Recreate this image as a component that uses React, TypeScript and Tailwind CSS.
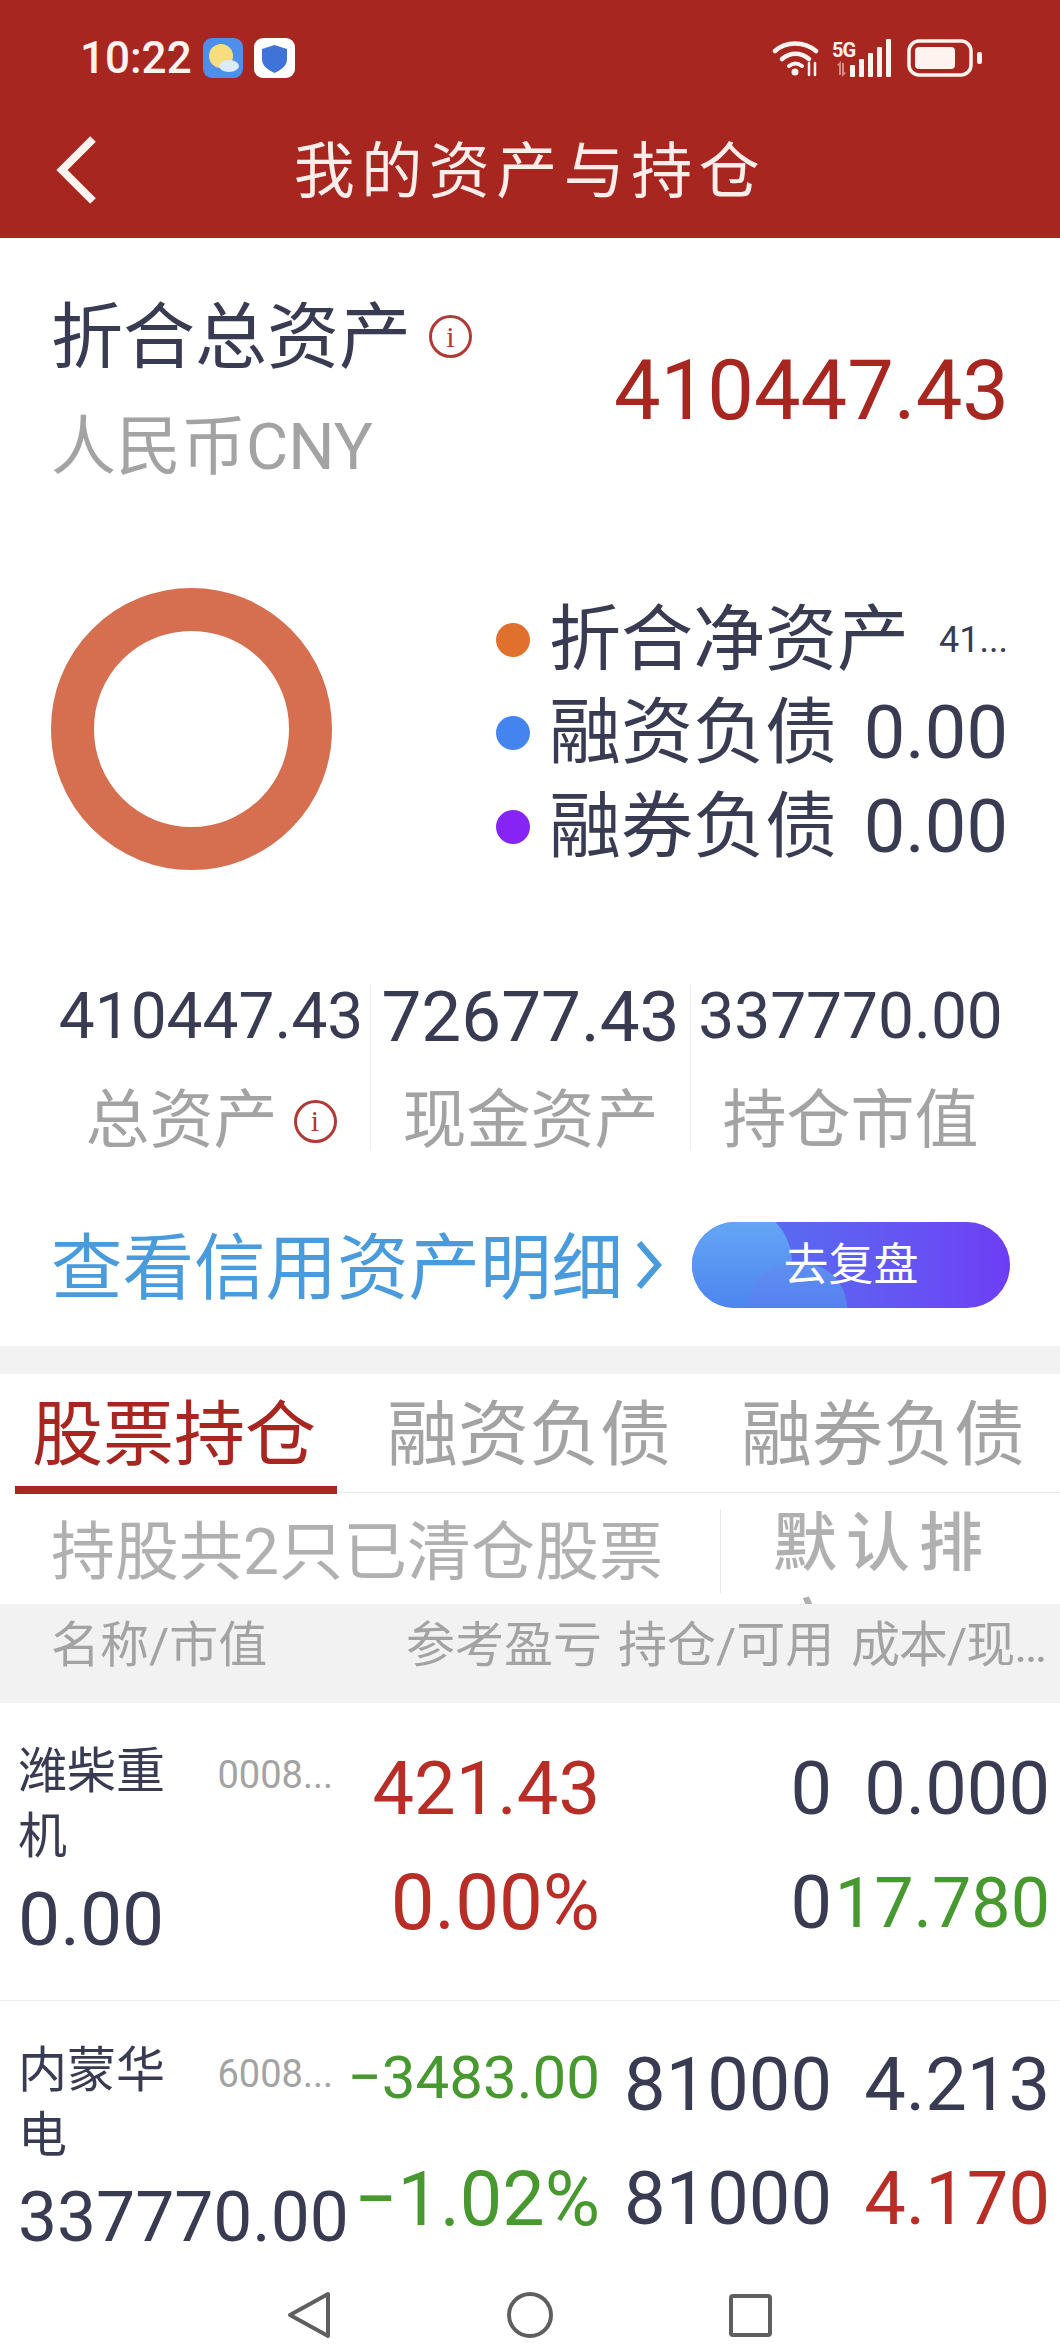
const holdings = [
  {
    name: "潍柴重机", code: "0008...", value: "0.00", valueSize: "text-[75px]",
    pnl: "421.43", pnlPct: "0.00%", pnlColor: "text-[#B92D27]", pnlLine: "text-[74px] leading-[100px]", pctSize: "text-[78px]", nameTop: "",
    hold: "0", avail: "0", cost: "0.000", costColor: "text-[#383B52]", price: "17.780", priceColor: "text-[#46982F]", priceSize: "text-[70px]",
  },
  {
    name: "内蒙华电", code: "6008...", value: "337770.00", valueSize: "text-[69.5px]",
    pnl: "−3483.00", pnlPct: "−1.02%", pnlColor: "text-[#46982F]", pnlLine: "text-[60px] leading-[86px]", pctSize: "text-[75.5px]", nameTop: "mt-[3px]",
    hold: "81000", avail: "81000", cost: "4.213", costColor: "text-[#383B52]", price: "4.170", priceColor: "text-[#B92D27]", priceSize: "text-[74px]",
  },
];

function InfoIcon({ className }: { className: string }) {
  return (
    <span className={`flex items-center justify-center rounded-full border-[3px] border-[#B03A34] font-['Liberation_Serif',serif] text-[#B03A34] ${className}`}>i</span>
  );
}

function StatusBar() {
  return (
    <div className="flex h-[100px] items-center pl-[80px] pr-[77px] pt-[15px]">
      <span className="w-[123px] text-[44px] font-medium leading-none text-[#FFF3F0]">10:22</span>
      <svg viewBox="0 0 40 40" className="h-[40px] w-[40px]">
        <rect width="40" height="40" rx="9" fill="#4D8FEA" />
        <circle cx="18" cy="18" r="12" fill="#F8DD7E" />
        <ellipse cx="26" cy="28" rx="10" ry="6" fill="#DCEBFA" />
      </svg>
      <svg viewBox="0 0 41 40" className="ml-[11px] h-[40px] w-[41px]">
        <rect width="41" height="40" rx="9" fill="#FFFFFF" />
        <path d="M20.5 7 L33 11 V21 C33 28 27 32 20.5 35 C14 32 8 28 8 21 V11 Z" fill="#3F73D8" />
      </svg>
      <div className="ml-auto flex items-center">
        <svg viewBox="0 0 48 38" className="h-[38px] w-[48px]" fill="none" stroke="#FFF3F0" strokeLinecap="round">
          <path d="M3 12 C14 2 32 2 44 12" strokeWidth="4.5" />
          <path d="M10 20 C18 13 29 13 37 20" strokeWidth="4.5" />
          <path d="M17 27 C21 24 26 24 30 27" strokeWidth="4" />
          <circle cx="23" cy="33" r="3.5" fill="#FFF3F0" stroke="none" />
          <path d="M37 24 V36 M43 36 V24" strokeWidth="2.5" />
        </svg>
        <div className="relative ml-[12px] h-[38px] w-[60px]">
          <span className="absolute left-0 top-[1px] text-[20px] font-bold leading-none tracking-[-1px] text-[#FFF3F0]">5G</span>
          <svg viewBox="0 0 60 38" className="h-[38px] w-[60px]" fill="#FFF3F0">
            <path d="M3 28 L7 24 V38 H5 V29 Z M12 36 L8 40 V26 H10 V35 Z" fill="#D98A84" transform="translate(2 -2)" />
            <rect x="18" y="26" width="5" height="12" rx="1" />
            <rect x="27" y="20" width="5" height="18" rx="1" />
            <rect x="36" y="14" width="5" height="24" rx="1" />
            <rect x="45" y="8" width="5" height="30" rx="1" />
            <rect x="54" y="0" width="5" height="38" rx="1" />
          </svg>
        </div>
        <svg viewBox="0 0 76 38" className="ml-[15px] h-[38px] w-[76px]">
          <rect x="2" y="2" width="62" height="34" rx="10" fill="none" stroke="#FFF3F0" strokeWidth="3.5" />
          <rect x="8" y="8" width="40" height="22" rx="4" fill="#FFF3F0" />
          <rect x="70" y="13" width="5" height="12" rx="2" fill="#FFF3F0" />
        </svg>
      </div>
    </div>
  );
}

function LegendRow({ dot, label, value, small }: { dot: string; label: string; value: string; small?: boolean }) {
  return (
    <div className="flex h-[93.5px] items-center">
      <span className={`h-[34px] w-[34px] rounded-full ${dot}`} />
      <span className="ml-[19px] text-[72px] leading-none text-[#383B52]">{label}</span>
      <span className={`ml-auto leading-none text-[#383B52] ${small ? "text-[36px]" : "text-[74px]"}`}>{value}</span>
    </div>
  );
}

function Stat({ value, size, label, info }: { value: string; size: string; label: string; info?: boolean }) {
  return (
    <div className="flex h-[166px] flex-col items-center first:border-l-0 border-l-[1.5px] border-[#EEEEEE]">
      <span className={`-mt-[2px] h-[70px] whitespace-nowrap leading-[70px] text-[#383B52] ${size}`}>{value}</span>
      <div className="mt-[34px] flex items-center whitespace-nowrap text-[64px] leading-[70px] text-[#A3A3A3]">
        {label}
        {info && <InfoIcon className="ml-[16px] h-[43px] w-[43px] text-[30px]" />}
      </div>
    </div>
  );
}

function HoldingRow({ h, first }: { h: (typeof holdings)[number]; first: boolean }) {
  return (
    <div className={`grid grid-cols-[347px_235px_232px_218px] pl-[18px] ${first ? "h-[298px] border-b-[1.5px] border-[#EEEEEE] pt-[36px]" : "h-[269px] pt-[34px]"}`}>
      <div className={h.nameTop}>
        <div className="flex justify-between pr-[32px]">
          <span className="w-[150px] text-[49px] leading-[65px] text-[#383B52]">{h.name}</span>
          <span className="text-[38px] leading-[72px] text-[#A3A3A3]">{h.code}</span>
        </div>
        <div className={`mt-[10px] leading-[80px] text-[#383B52] ${h.valueSize}`}>{h.value}</div>
      </div>
      <div className={`flex flex-col items-end ${h.pnlColor}`}>
        <div className={`h-[100px] whitespace-nowrap ${h.pnlLine}`}>{h.pnl}</div>
        <div className={`mt-[14px] whitespace-nowrap leading-[100px] ${h.pctSize}`}>{h.pnlPct}</div>
      </div>
      <div className="text-right text-[74px] leading-[100px] text-[#383B52]">
        <div className="h-[100px]">{h.hold}</div>
        <div className="mt-[14px]">{h.avail}</div>
      </div>
      <div className="flex flex-col items-end leading-[100px]">
        <div className={`h-[100px] text-[74px] ${h.costColor}`}>{h.cost}</div>
        <div className={`mt-[14px] ${h.priceSize} ${h.priceColor}`}>{h.price}</div>
      </div>
    </div>
  );
}

export default function App() {
  return (
    <main className="h-[2346px] w-[1060px] overflow-hidden bg-white font-['Roboto','Noto_Sans_CJK_SC',sans-serif]">
      {/* header */}
      <header className="h-[238px] bg-[#A82620]">
        <StatusBar />
        <div className="relative flex h-[138px] items-center justify-center pt-[6px]">
          <svg viewBox="0 0 42 68" className="absolute left-[55px] top-[36px] h-[68px] w-[42px]" fill="none" stroke="#FFF3F0" strokeWidth="8">
            <path d="M38 3 L7 34 L38 65" />
          </svg>
          <h1 className="text-[61px] leading-none tracking-[6.5px] text-[#FBEDE9]">我的资产与持仓</h1>
        </div>
      </header>

      {/* summary */}
      <section className="flex h-[302px] justify-between pl-[51px] pr-[51px] pt-[62px]">
        <div>
          <div className="flex items-center text-[72px] leading-[76px] text-[#383B52]">
            折合总资产
            <InfoIcon className="mb-[3px] ml-[18px] h-[43px] w-[43px] text-[30px]" />
          </div>
          <div className="mt-[33px] text-[65px] leading-[76px] text-[#A3A3A3]">人民币CNY</div>
        </div>
        <div className="mt-[48px] text-[83px] leading-[86px] text-[#A82620]">410447.43</div>
      </section>

      {/* donut + legend */}
      <section className="flex h-[444px] items-start pl-[51px] pr-[52px] pt-[48px]">
        <div className="h-[282px] w-[281px] rounded-full border-[43px] border-[#D66F50]" />
        <div className="ml-[164px] mt-[5px] flex-1">
          <LegendRow dot="bg-[#E0702D]" label="折合净资产" value="41..." small />
          <LegendRow dot="bg-[#4484EE]" label="融资负债" value="0.00" />
          <LegendRow dot="bg-[#8524F5]" label="融券负债" value="0.00" />
        </div>
      </section>

      {/* stats */}
      <section className="grid grid-cols-[318px_320px_320px] pl-[52px]">
        <Stat value="410447.43" size="text-[64px]" label="总资产" info />
        <Stat value="72677.43" size="text-[71px]" label="现金资产" />
        <Stat value="337770.00" size="text-[64px]" label="持仓市值" />
      </section>

      {/* credit link */}
      <section className="flex h-[196px] items-start pl-[51px] pr-[50px] pt-[72px]">
        <span className="mt-[4px] text-[71.5px] leading-[86px] text-[#4A9BDC]">查看信用资产明细</span>
        <svg viewBox="0 0 26 50" className="ml-[13px] mt-[18px] h-[50px] w-[26px]" fill="none" stroke="#4A9BDC" strokeWidth="6">
          <path d="M3 3 L22 25 L3 47" />
        </svg>
        <div className="relative ml-auto flex h-[86px] w-[318px] items-center justify-center overflow-hidden rounded-full bg-gradient-to-r from-[#4A78EE] to-[#6E3DF5]">
          <span className="absolute -left-[18px] -top-[18px] h-[118px] w-[118px] rounded-full bg-gradient-to-b from-[#6AACF6] to-[#4A80EE]" />
          <span className="absolute left-[55px] top-[41px] h-[90px] w-[100px] rounded-full bg-gradient-to-b from-[#5F8FF0] to-[#4F72F0]" />
          <span className="relative text-[45px] leading-none text-white">去复盘</span>
        </div>
      </section>

      <div className="h-[28px] bg-[#F2F2F2]" />

      {/* tabs */}
      <nav className="ml-[15px] flex h-[119px] border-b-[1.5px] border-[#E8E8E8] text-[71px] leading-[122px] text-[#A3A3A3]">
        <span className="relative w-[322px] whitespace-nowrap pl-[17px] text-[#A82620]">
          股票持仓
          <span className="absolute bottom-[-1.5px] left-0 h-[8px] w-full bg-[#A82620]" />
        </span>
        <span className="ml-[50px] whitespace-nowrap">融资负债</span>
        <span className="ml-[70px] whitespace-nowrap">融券负债</span>
      </nav>

      {/* filter row */}
      <div className="flex h-[111px] overflow-hidden pl-[51px]">
        <span className="w-[669px] whitespace-nowrap text-[64px] leading-[119px] text-[#B0B0B0]">持股共2只已清仓股票</span>
        <div className="mt-[16px] h-[84px] border-l-[1.5px] border-[#E8E8E8]" />
        <span className="ml-[52px] mt-[8px] w-[240px] text-[64px] font-medium leading-[86px] tracking-[9px] text-[#B0B0B0]">默认排序</span>
      </div>

      {/* table head */}
      <div className="flex h-[99px] bg-[#F2F2F2] pl-[51px] pt-[15px] text-[49px] leading-[54px] text-[#A3A3A3]">
        <span className="w-[355px] whitespace-nowrap">名称/市值</span>
        <span className="w-[212px] whitespace-nowrap">参考盈亏</span>
        <span className="w-[233px] whitespace-nowrap">持仓/可用</span>
        <span className="whitespace-nowrap tracking-[-1px]">成本/现…</span>
      </div>

      {holdings.map((h, i) => (
        <HoldingRow key={h.code} h={h} first={i === 0} />
      ))}

      {/* system nav */}
      <div className="h-[76px] bg-white">
        <svg viewBox="0 0 1060 76" className="h-[76px] w-[1060px]" fill="none" stroke="#5F5F5F" strokeWidth="4">
          <path d="M328 24 L328 66 L290 45 Z" strokeLinejoin="round" />
          <circle cx="530" cy="45" r="21" />
          <rect x="731" y="26" width="39" height="39" rx="2" />
        </svg>
      </div>
    </main>
  );
}
